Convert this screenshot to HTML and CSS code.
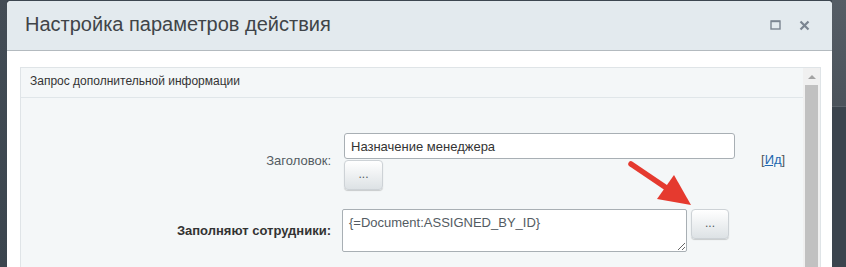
FILE: index.html
```html
<!DOCTYPE html>
<html lang="ru">
<head>
<meta charset="utf-8">
<title>Настройка параметров действия</title>
<link rel="stylesheet" href="styles.css">
</head>
<body>
<div class="left-strip"></div>
<div class="dialog">
  <div class="dlg-head">
    <div class="dlg-title">Настройка параметров действия</div>
    <div class="dlg-icons">
      <svg class="ico" width="11" height="10" viewBox="0 0 11 10"><rect x="1" y="1" width="9" height="8" fill="none" stroke="#7b8591" stroke-width="1.4"/><rect x="1" y="0.6" width="9" height="1.6" fill="#7b8591"/></svg>
      <svg class="ico" width="11" height="11" viewBox="0 0 11 11"><path d="M1.5 1.5 L9.5 9.5 M9.5 1.5 L1.5 9.5" stroke="#7b8591" stroke-width="2.2" stroke-linecap="butt"/></svg>
    </div>
  </div>
  <div class="dlg-body">
    <div class="box">
      <div class="main">
        <div class="section-head">Запрос дополнительной информации</div>
        <div class="form">
          <div class="label">Заголовок:</div>
          <div class="field-stack">
            <input class="text-input" type="text" value="Назначение менеджера" readonly>
            <button class="dots-btn first">...</button>
          </div>
          <div class="id-link">[<a href="#">Ид</a>]</div>

          <div class="label bold">Заполняют сотрудники:</div>
          <div class="field-row">
            <textarea class="text-area" readonly>{=Document:ASSIGNED_BY_ID}</textarea>
            <button class="dots-btn">...</button>
          </div>
          <div></div>

          <div></div>
          <div class="field-row last"><button class="dots-btn peek" aria-label="more"></button></div>
          <div></div>
        </div>
      </div>
      <div class="scroll">
        <div class="scroll-arrow"></div>
        <div class="scroll-thumb"></div>
      </div>
    </div>
  </div>
</div>
<div class="right-strip"><div class="right-top"></div></div>

<svg class="arrow" width="846" height="267" viewBox="0 0 846 267">
  <line x1="631" y1="164" x2="668" y2="189" stroke="#e53a2f" stroke-width="5.5" stroke-linecap="round"/>
  <polygon points="691,205 657,199 674,175" fill="#e53a2f"/>
</svg>
</body>
</html>
```

FILE: styles.css
```css
* { box-sizing: border-box; }
html, body { margin: 0; padding: 0; }
body {
  width: 846px;
  height: 267px;
  overflow: hidden;
  display: flex;
  align-items: flex-start;
  background: #3d4750;
  font-family: "Liberation Sans", Arial, sans-serif;
  position: relative;
}
.left-strip {
  width: 7px;
  height: 267px;
  flex: none;
  background: linear-gradient(#434c55, #3b454e);
}
.right-strip {
  flex: 1;
  height: 267px;
  background: #3b444d;
}
.right-top {
  height: 107px;
  background: linear-gradient(#555d65, #4b535b);
  border-bottom: 1px solid #5b636b;
}
.dialog {
  width: 825px;
  flex: none;
  margin-top: 1px;
  height: 300px;
  background: #ffffff;
  border-radius: 4px 4px 0 0;
  overflow: hidden;
}
.dlg-head {
  height: 50px;
  background: #e3eaee;
  border-bottom: 1px solid #b3babf;
  display: flex;
  align-items: center;
  padding: 0 22px 0 18px;
}
.dlg-title {
  flex: 1;
  font-size: 20px;
  color: #404448;
  line-height: 49px;
  padding-bottom: 2px;
}
.dlg-icons {
  display: flex;
  align-items: center;
  gap: 18px;
  padding-bottom: 1px;
}
.ico { display: block; }
.dlg-body {
  padding: 16px 11px 0 13px;
}
.box {
  border: 1px solid #dfe4e7;
  background: #f4f7f8;
  display: flex;
  height: 240px;
}
.main { flex: 1; }
.section-head {
  height: 30px;
  border-bottom: 1px solid #e0e6e9;
  font-size: 12px;
  line-height: 26px;
  padding: 0 0 3px 9px;
  color: #333;
}
.form {
  display: grid;
  grid-template-columns: 310px 412px 1fr;
  column-gap: 12px;
  row-gap: 19px;
  padding-top: 35px;
  align-items: center;
}
.label {
  text-align: right;
  font-size: 13px;
  color: #535b62;
  padding-bottom: 3px;
}
.label.bold {
  font-weight: bold;
  color: #333;
  padding-bottom: 1px;
}
.field-stack {
  display: flex;
  flex-direction: column;
  align-items: flex-start;
  gap: 1px;
}
.text-input {
  margin-left: 1px;
  width: 391px;
  height: 26px;
  border: 1px solid #a8afb4;
  border-radius: 3px;
  background: #fff;
  font-family: "Liberation Sans", Arial, sans-serif;
  font-size: 13px;
  color: #333;
  padding: 0 6px;
  outline: none;
}
.field-row {
  display: flex;
  align-items: flex-start;
  gap: 4px;
}
.text-area {
  margin-left: -1px;
  width: 345px;
  height: 43px;
  border: 1px solid #a8afb4;
  border-radius: 2px;
  background: #fff;
  font-family: "Liberation Sans", Arial, sans-serif;
  font-size: 13px;
  color: #535b62;
  padding: 5px 6px;
  outline: none;
  overflow: hidden;
}
.dots-btn {
  width: 38px;
  height: 30px;
  border: 1px solid #cdd2d6;
  border-radius: 4px;
  background: linear-gradient(#ffffff, #dde2e5);
  box-shadow: 0 1px 1px rgba(0, 0, 0, 0.18);
  font-family: "Liberation Sans", Arial, sans-serif;
  font-size: 12px;
  color: #555b61;
  padding: 0 0 2px;
}
.dots-btn.first { margin-left: 1px; width: 39px; }
.field-row.last { padding-left: 393px; margin-top: -4px; }
.dots-btn.peek { width: 35px; }
.id-link {
  font-size: 13px;
  color: #555;
  margin-left: -6px;
  padding-bottom: 5px;
}
.id-link a {
  color: #2067b0;
  text-decoration: underline;
}
.scroll {
  width: 17px;
  flex: none;
  background: #f0f0f0;
  display: flex;
  flex-direction: column;
  align-items: center;
}
.scroll-arrow {
  margin-top: 7px;
  width: 0;
  height: 0;
  border-left: 4px solid transparent;
  border-right: 4px solid transparent;
  border-bottom: 4px solid #a3a3a3;
}
.scroll-thumb {
  margin-top: 6px;
  width: 13px;
  flex: 1;
  background: #c1c1c1;
}
.arrow {
  position: absolute;
  left: 0;
  top: 0;
  pointer-events: none;
}
```
